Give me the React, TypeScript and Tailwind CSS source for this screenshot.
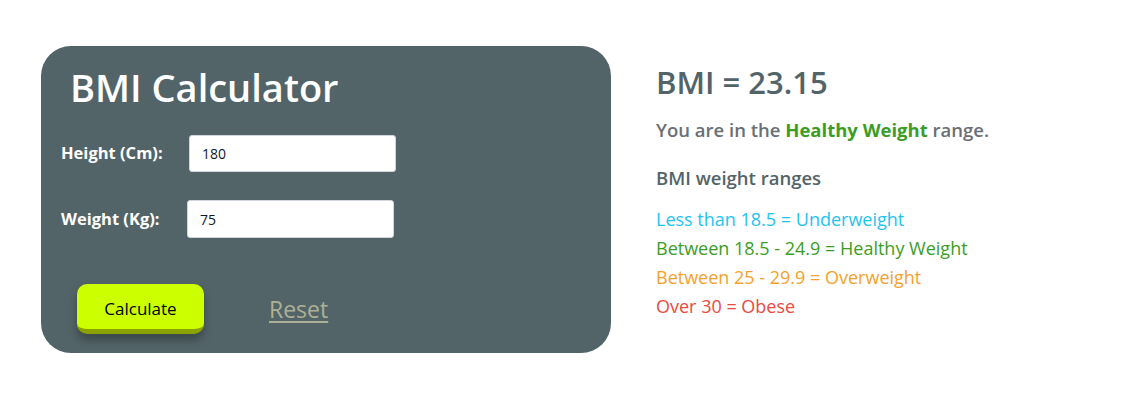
import React, { useState } from "react";

const ranges = [
  { text: "Less than 18.5 = Underweight", color: "text-[#1ec4f2]" },
  { text: "Between 18.5 - 24.9 = Healthy Weight", color: "text-[#3c9d25]" },
  { text: "Between 25 - 29.9 = Overweight", color: "text-[#f5a12e]" },
  { text: "Over 30 = Obese", color: "text-[#ea4a40]" },
];

const App = () => {
  const [height, setHeight] = useState("180");
  const [weight, setWeight] = useState("75");

  return (
    <div className="flex pl-[41px] pt-[46px] font-['Open_Sans',sans-serif] bg-white min-h-[404px]">
      <div className="w-[570px] h-[307px] rounded-[30px] bg-[#536469] pt-[14px]">
        <h1 className="pl-[29px] text-[38px] leading-[54px] font-semibold text-white">
          BMI Calculator
        </h1>
        <div className="pl-[20px] mt-[21px] flex items-center">
          <label className="w-[128px] text-[16.5px] font-bold text-white">Height (Cm):</label>
          <input
            value={height}
            onChange={(e) => setHeight(e.target.value)}
            className="w-[207px] h-[37px] rounded-[3px] border border-gray-300 bg-white pl-[12px] text-[14px] text-gray-900 outline-none"
          />
        </div>
        <div className="pl-[20px] mt-[28px] flex items-center">
          <label className="w-[126px] text-[16.5px] font-bold text-white">Weight (Kg):</label>
          <input
            value={weight}
            onChange={(e) => setWeight(e.target.value)}
            className="w-[207px] h-[38px] rounded-[3px] border border-gray-300 bg-white pl-[12px] text-[14px] text-gray-900 outline-none"
          />
        </div>
        <div className="pl-[36px] mt-[46px] flex items-center">
          <button className="w-[127px] h-[50px] pt-[4px] rounded-[10px] bg-[#ccff00] border-b-[5px] border-[#8aa300] text-[17px] text-black shadow-[0_6px_10px_rgba(0,0,0,0.3)]">
            Calculate
          </button>
          <a href="#" className="ml-[65px] text-[23px] text-[#aeb095] underline underline-offset-[3px]">
            Reset
          </a>
        </div>
      </div>
      <div className="ml-[45px] pt-[15px]">
        <h2 className="text-[31px] leading-[42px] text-[#536469] font-semibold">BMI = 23.15</h2>
        <p className="mt-[13px] text-[18.5px] font-semibold text-[#6b6f75]">
          You are in the <span className="font-bold text-[#3c9d25]">Healthy Weight</span> range.
        </p>
        <h3 className="mt-[20px] text-[18.5px] font-semibold text-[#536469]">BMI weight ranges</h3>
        <ul className="mt-[13px]">
          {ranges.map((r) => (
            <li key={r.text} className={`text-[18px] leading-[29px] ${r.color}`}>
              {r.text}
            </li>
          ))}
        </ul>
      </div>
    </div>
  );
};

export default App;
